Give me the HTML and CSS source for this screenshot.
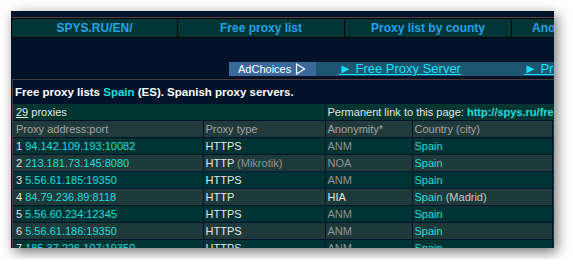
FILE: index.html
```html
<!DOCTYPE html>
<html>
<head>
    <title>Free proxy lists Spain</title>
    <link rel="stylesheet" href="styles.css">
</head>
<body>
    <div class="window">
        <div class="nav">
            <a href="#">SPYS.RU/EN/</a>
            <a href="#">Free proxy list</a>
            <a href="#">Proxy list by county</a>
            <a href="#">Anonymous proxy list</a>
        </div>

        <div class="adbar">
            <span class="adchoices">AdChoices
                <svg width="11" height="12" viewBox="0 0 11 12"><polygon points="1.5,1 9.5,6 1.5,11" fill="none" stroke="#fff" stroke-width="1.2"/></svg>
            </span>
            <span class="adlinks">
                <a href="#">&#9658; Free Proxy Server</a>
                <a href="#">&#9658; Proxy Server List</a>
            </span>
        </div>

        <div class="main">
            <table class="proxies">
                <colgroup>
                    <col class="c-addr">
                    <col class="c-type">
                    <col class="c-anon">
                    <col class="c-country">
                    <col class="c-host">
                </colgroup>
                <tr class="title">
                    <td colspan="5">Free proxy lists <span class="cy">Spain</span> (ES). Spanish proxy servers.</td>
                </tr>
                <tr class="count">
                    <td colspan="2"><u>29</u> proxies</td>
                    <td colspan="3">Permanent link to this page: <a class="perm" href="#">http://spys.ru/free-proxy-list/ES/</a></td>
                </tr>
                <tr class="head">
                    <td>Proxy address:port</td>
                    <td>Proxy type</td>
                    <td>Anonymity*</td>
                    <td>Country (city)</td>
                    <td>Hostname/ORG</td>
                </tr>
                <tr class="odd">
                    <td>1 <span class="cy">94.142.109.193:10082</span></td>
                    <td>HTTPS</td>
                    <td class="dim">ANM</td>
                    <td class="cy">Spain</td>
                    <td class="cy">static.vodafone.es</td>
                </tr>
                <tr class="even">
                    <td>2 <span class="cy">213.181.73.145:8080</span></td>
                    <td>HTTP <span class="dim">(Mikrotik)</span></td>
                    <td class="dim">NOA</td>
                    <td class="cy">Spain</td>
                    <td class="dim">145.73.181.213</td>
                </tr>
                <tr class="odd">
                    <td>3 <span class="cy">5.56.61.185:19350</span></td>
                    <td>HTTPS</td>
                    <td class="dim">ANM</td>
                    <td class="cy">Spain</td>
                    <td class="cy">static.ono.es</td>
                </tr>
                <tr class="even">
                    <td>4 <span class="cy">84.79.236.89:8118</span></td>
                    <td>HTTP</td>
                    <td>HIA</td>
                    <td><span class="cy">Spain</span> <span class="lt">(Madrid)</span></td>
                    <td class="cy">static.jazztel.es</td>
                </tr>
                <tr class="odd">
                    <td>5 <span class="cy">5.56.60.234:12345</span></td>
                    <td>HTTPS</td>
                    <td class="dim">ANM</td>
                    <td class="cy">Spain</td>
                    <td class="cy">static.ono.es</td>
                </tr>
                <tr class="even">
                    <td>6 <span class="cy">5.56.61.186:19350</span></td>
                    <td>HTTPS</td>
                    <td class="dim">ANM</td>
                    <td class="cy">Spain</td>
                    <td class="cy">static.ono.es</td>
                </tr>
                <tr class="odd">
                    <td>7 <span class="cy">185.37.226.107:19350</span></td>
                    <td>HTTPS</td>
                    <td class="dim">ANM</td>
                    <td class="cy">Spain</td>
                    <td class="cy">static.ono.es</td>
                </tr>
            </table>
        </div>
    </div>
</body>
</html>
```

FILE: styles.css
```css
body { margin: 0; background: #fff; font-family: "Liberation Sans", Arial, sans-serif; }
.window { margin: 11px; width: 543px; height: 237px; overflow: hidden; background: #011229; box-shadow: 3px 4px 12px rgba(0,0,0,0.55); padding-top: 6px; box-sizing: border-box; }

.nav { display: flex; border-top: 1px solid #5a4646; width: 700px; }
.nav a { flex: 0 0 166px; height: 18px; line-height: 18px; background: #003535; border: 1px solid #000; border-left: none; color: #1ea4e6; font-size: 12px; font-weight: bold; text-align: center; text-decoration: none; white-space: nowrap; }
.nav a:first-child { flex-basis: 165px; border-left: 1px solid #000; }

.adbar { display: flex; margin: 24px 0 0 218px; height: 14px; width: 500px; }
.adchoices { display: flex; align-items: center; gap: 4px; background: #3a6a9c; color: #fff; font-size: 11px; padding: 0 0 0 9px; width: 78px; }
.adlinks { flex: 1; display: flex; gap: 63px; background: #1c5670; padding-left: 23px; white-space: nowrap; }
.adlinks a { color: #16e0f8; font-size: 13px; line-height: 14px; }

.main { margin: 3px 0 0 1px; border-top: 1px solid #4d3a3a; border-left: 1px solid #4d3a3a; }
.proxies { border-collapse: collapse; table-layout: fixed; width: 660px; font-size: 11px; color: #e6e6e6; }
.proxies td { height: 16px; line-height: 16px; padding: 0 2px; border-bottom: 1px solid #011229; border-right: 1px solid #011229; white-space: nowrap; overflow: hidden; }
.proxies td:first-child { padding-left: 3px; }
.c-addr { width: 190px; }
.c-type { width: 122px; }
.c-anon { width: 87px; }
.c-country { width: 140px; }
.c-host { width: 121px; }

.proxies .title td { height: 23px; font-size: 11.5px; font-weight: bold; color: #fff; padding-left: 2px; }
.count td { background: #003532; }
.head td { background: #213a3b; color: #a4a4a4; }
.odd td { background: #003333; }
.even td { background: #1f3a3a; }

.cy { color: #1edede; }
.dim { color: #949494; }
.lt { color: #c8c8c8; }
.perm { color: #20dcdc; font-weight: bold; text-decoration: none; }
```
